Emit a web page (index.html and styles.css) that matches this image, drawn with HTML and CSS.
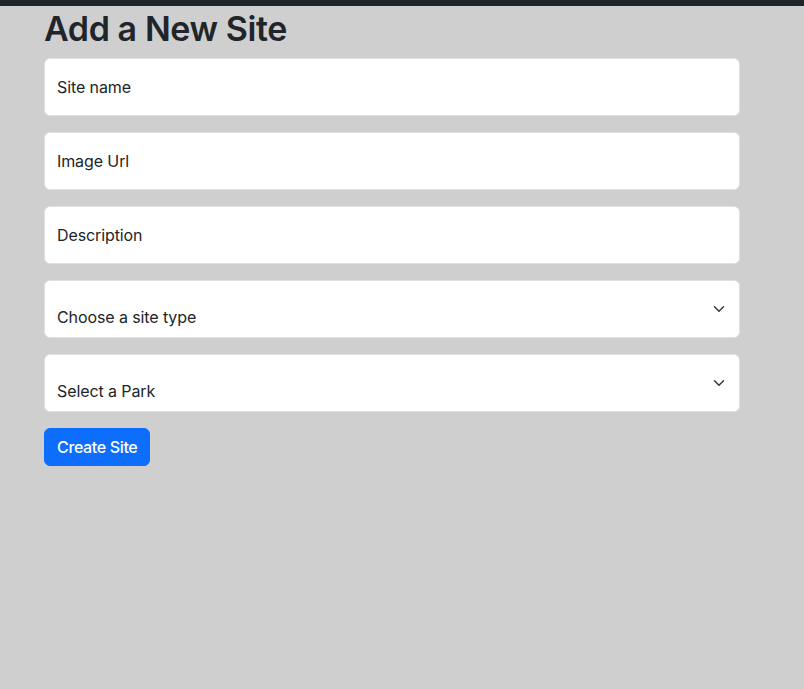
FILE: index.html
```html
<!DOCTYPE html>
<html lang="en">
<head>
<meta charset="utf-8">
<title>Add a New Site</title>
<link rel="stylesheet" href="styles.css">
</head>
<body>
<div class="topbar"></div>
<main class="page">
  <h1 class="title">Add a New Site</h1>
  <form class="site-form">
    <div class="field"><span class="label">Site name</span></div>
    <div class="field"><span class="label">Image Url</span></div>
    <div class="field"><span class="label">Description</span></div>
    <div class="field select"><span class="label">Choose a site type</span>
      <svg class="chev" width="16" height="16" viewBox="0 0 16 16"><path d="M2 5l6 6 6-6" fill="none" stroke="#343a40" stroke-width="2" stroke-linecap="round" stroke-linejoin="round"/></svg>
    </div>
    <div class="field select"><span class="label">Select a Park</span>
      <svg class="chev" width="16" height="16" viewBox="0 0 16 16"><path d="M2 5l6 6 6-6" fill="none" stroke="#343a40" stroke-width="2" stroke-linecap="round" stroke-linejoin="round"/></svg>
    </div>
    <button type="button" class="btn">Create Site</button>
  </form>
</main>
</body>
</html>
```
FILE: styles.css
```css
html, body {
  margin: 0;
  padding: 0;
}
body {
  background: #cfcfcf;
  font-family: Inter, "Noto Sans", sans-serif;
  color: #212529;
  min-height: 689px;
}
.topbar {
  height: 6px;
  background: #212529;
}
.page {
  width: 696px;
  margin-left: 44px;
}
.title {
  margin: 0;
  font-size: 34px;
  font-weight: 600;
  line-height: 46px;
  letter-spacing: -0.4px;
  height: 52px;
}
.site-form {
  display: flex;
  flex-direction: column;
  gap: 16px;
}
.field {
  box-sizing: border-box;
  height: 58px;
  background: #fff;
  border: 1px solid #dee2e6;
  border-radius: 6px;
  padding: 0 12px;
  display: flex;
  align-items: center;
  font-size: 16px;
  letter-spacing: -0.1px;
}
.field.select {
  align-items: flex-start;
  padding-top: 26px;
  justify-content: space-between;
}
.chev {
  width: 16px;
  height: 12px;
  margin-top: -4px;
}
.btn {
  align-self: flex-start;
  background: #0d6efd;
  color: #fff;
  border: 1px solid #0d6efd;
  border-radius: 6px;
  font-family: Inter, "Noto Sans", sans-serif;
  font-size: 16px;
  font-weight: 500;
  letter-spacing: -0.35px;
  height: 38px;
  padding: 0 12px;
}
```
